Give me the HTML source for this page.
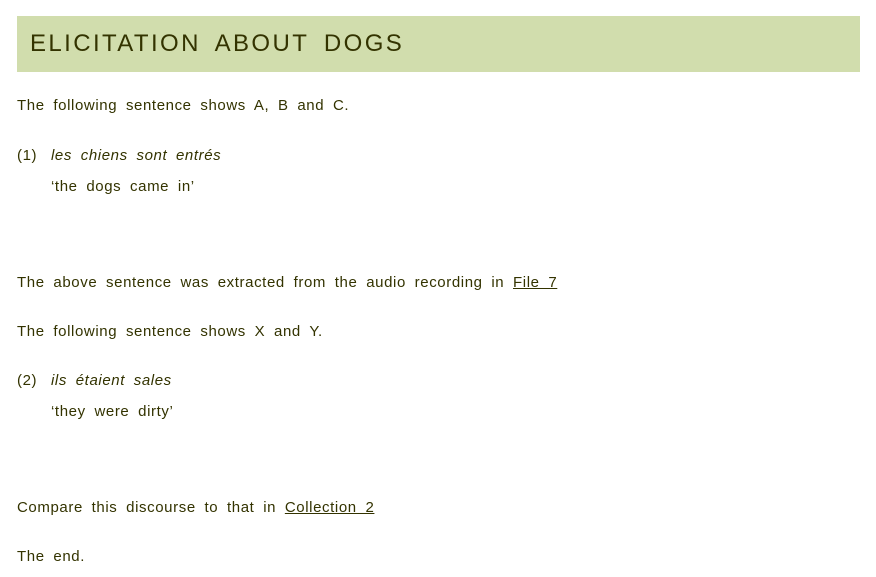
<!DOCTYPE html>
<html><head><meta charset="utf-8"><style>
html,body{margin:0;padding:0;background:#fff;width:876px;height:577px;overflow:hidden}
body{font-family:"Liberation Sans","DejaVu Sans",sans-serif;color:#333300;font-size:15px;letter-spacing:0.6px;word-spacing:4px}
.h{position:absolute;left:17px;top:16px;width:843px;height:56px;background:#d1ddad}
.h span{position:absolute;left:13px;top:14px;font-size:24px;letter-spacing:2.4px;word-spacing:6px;color:#333300;line-height:28px}
.t{position:absolute;left:17px;white-space:nowrap;line-height:18px}
.i{font-style:italic}
a{color:#333300;text-decoration:underline}
</style></head><body>
<div class="h"><span>ELICITATION ABOUT DOGS</span></div>
<div class="t" style="top:97px">The following sentence shows A, B and C.</div>
<div class="t" style="top:147px">(1)</div>
<div class="t i" style="top:147px;left:51px">les chiens sont entrés</div>
<div class="t" style="top:178px;left:51px">‘the dogs came in’</div>
<div class="t" style="top:274px">The above sentence was extracted from the audio recording in <a>File 7</a></div>
<div class="t" style="top:323px">The following sentence shows X and Y.</div>
<div class="t" style="top:372px">(2)</div>
<div class="t i" style="top:372px;left:51px">ils étaient sales</div>
<div class="t" style="top:403px;left:51px">‘they were dirty’</div>
<div class="t" style="top:499px">Compare this discourse to that in <a>Collection 2</a></div>
<div class="t" style="top:548px">The end.</div>
</body></html>
